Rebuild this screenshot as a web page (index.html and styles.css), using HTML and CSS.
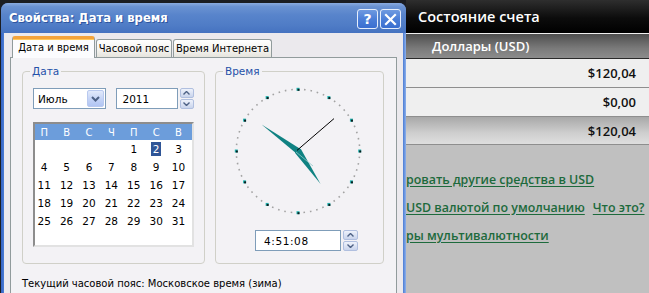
FILE: index.html
```html
<!DOCTYPE html>
<html lang="ru">
<head>
<meta charset="utf-8">
<title>Свойства: Дата и время</title>
<link rel="stylesheet" href="styles.css">
</head>
<body>
<div class="page">
  <div class="desk"></div>
  <div class="account">
    <div class="acc-head">Состояние счета</div>
    <div class="acc-sub">Доллары (USD)</div>
    <div class="acc-row">$120,04</div>
    <div class="acc-row">$0,00</div>
    <div class="acc-row acc-total">$120,04</div>
    <div class="links">
      <div class="link-line"><a class="link">ровать другие средства в USD</a></div>
      <div class="link-line"><a class="link">USD валютой по умолчанию</a><a class="link">Что это?</a></div>
      <div class="link-line"><a class="link">ры мультивалютности</a></div>
    </div>
  </div>

  <div class="window">
    <div class="titlebar">
      <span class="title">Свойства: Дата и время</span>
      <div class="tbtns">
        <span class="tbtn tbtn-help">?</span>
        <span class="tbtn"><svg width="13" height="13" viewBox="0 0 13 13"><path d="M2 2 L11 11 M11 2 L2 11" stroke="#fff" stroke-width="2.2" stroke-linecap="square"/></svg></span>
      </div>
    </div>
    <div class="wbody">
      <div class="tabs">
        <div class="tab tab-active">Дата и время</div>
        <div class="tab tab-2">Часовой пояс</div>
        <div class="tab tab-3">Время Интернета</div>
      </div>
      <div class="panel">
        <div class="groups">
          <fieldset class="group group-date">
            <legend>Дата</legend>
            <div class="date-row">
              <div class="combo">
                <span class="combo-text">Июль</span>
                <span class="combo-btn"><svg width="9" height="6" viewBox="0 0 9 6"><path d="M1 1 L4.5 4.5 L8 1" fill="none" stroke="#4d6185" stroke-width="2"/></svg></span>
              </div>
              <div class="field year">2011</div>
              <div class="spin">
                <span class="spin-half"><svg width="7" height="4" viewBox="0 0 7 4"><path d="M0.5 3.5 L3.5 0.5 L6.5 3.5" fill="none" stroke="#4d6185" stroke-width="1.4"/></svg></span>
                <span class="spin-half"><svg width="7" height="4" viewBox="0 0 7 4"><path d="M0.5 0.5 L3.5 3.5 L6.5 0.5" fill="none" stroke="#4d6185" stroke-width="1.4"/></svg></span>
              </div>
            </div>
            <div class="calendar">
              <div class="cal-head">
                <span>П</span><span>В</span><span>С</span><span>Ч</span><span>П</span><span>С</span><span>В</span>
              </div>
              <div class="cal-grid">
                <span></span><span></span><span></span><span></span><span>1</span><span><b class="sel">2</b></span><span>3</span>
                <span>4</span><span>5</span><span>6</span><span>7</span><span>8</span><span>9</span><span>10</span>
                <span>11</span><span>12</span><span>13</span><span>14</span><span>15</span><span>16</span><span>17</span>
                <span>18</span><span>19</span><span>20</span><span>21</span><span>22</span><span>23</span><span>24</span>
                <span>25</span><span>26</span><span>27</span><span>28</span><span>29</span><span>30</span><span>31</span>
              </div>
            </div>
          </fieldset>
          <fieldset class="group group-time">
            <legend>Время</legend>
            <svg class="clock" width="130" height="130" viewBox="0 0 130 130">
              <circle cx="65" cy="65" r="61.7" fill="none" stroke="#a3a3a3" stroke-width="1.6" stroke-dasharray="1.6 4.86" stroke-dashoffset="0.8"/>
              <g class="hdots">
                <rect x="63.5" y="1.8" width="3" height="3"/>
                <rect x="94.35" y="10.07" width="3" height="3"/>
                <rect x="116.93" y="32.65" width="3" height="3"/>
                <rect x="125.2" y="63.5" width="3" height="3"/>
                <rect x="116.93" y="94.35" width="3" height="3"/>
                <rect x="94.35" y="116.93" width="3" height="3"/>
                <rect x="63.5" y="125.2" width="3" height="3"/>
                <rect x="32.65" y="116.93" width="3" height="3"/>
                <rect x="10.07" y="94.35" width="3" height="3"/>
                <rect x="1.8" y="63.5" width="3" height="3"/>
                <rect x="10.07" y="32.65" width="3" height="3"/>
                <rect x="32.65" y="10.07" width="3" height="3"/>
              </g>
              <g class="hdots-dark">
                <rect x="64.5" y="2.8" width="2" height="2"/>
                <rect x="95.35" y="11.07" width="2" height="2"/>
                <rect x="117.93" y="33.65" width="2" height="2"/>
                <rect x="126.2" y="64.5" width="2" height="2"/>
                <rect x="117.93" y="95.35" width="2" height="2"/>
                <rect x="95.35" y="117.93" width="2" height="2"/>
                <rect x="64.5" y="126.2" width="2" height="2"/>
                <rect x="33.65" y="117.93" width="2" height="2"/>
                <rect x="11.07" y="95.35" width="2" height="2"/>
                <rect x="2.8" y="64.5" width="2" height="2"/>
                <rect x="11.07" y="33.65" width="2" height="2"/>
                <rect x="33.65" y="11.07" width="2" height="2"/>
              </g>
              <polygon points="28.6,38.5 66.6,62.4 69,68 63.4,67.6" fill="#0f8282"/>
              <polygon points="87.6,98 62.1,67 62.4,61 67.9,63" fill="#0f8282"/>
              <path d="M63 66 L80 80" stroke="#8fc8c8" stroke-width="0.8"/>
              <path d="M64 64.4 L101 32.6" stroke="#000" stroke-width="1"/>
            </svg>
            <div class="time-row">
              <div class="field time">4:51:08</div>
              <div class="spin">
                <span class="spin-half"><svg width="7" height="4" viewBox="0 0 7 4"><path d="M0.5 3.5 L3.5 0.5 L6.5 3.5" fill="none" stroke="#4d6185" stroke-width="1.4"/></svg></span>
                <span class="spin-half"><svg width="7" height="4" viewBox="0 0 7 4"><path d="M0.5 0.5 L3.5 3.5 L6.5 0.5" fill="none" stroke="#4d6185" stroke-width="1.4"/></svg></span>
              </div>
            </div>
          </fieldset>
        </div>
        <div class="tz">Текущий часовой пояс: Московское время (зима)</div>
      </div>
    </div>
  </div>
</div>
</body>
</html>
```

FILE: styles.css
```css
* { box-sizing: border-box; }
html, body { margin: 0; padding: 0; }
body {
  font-family: "DejaVu Sans", Verdana, sans-serif;
  font-size: 10px;
  color: #000;
  background: #c0c0c0;
}
.page {
  position: relative;
  width: 649px;
  height: 293px;
  overflow: hidden;
  display: grid;
  grid-template-columns: 406px 1fr;
  background: #c0c0c0;
}
.desk { background: #1b1d22; }

/* ---------- account panel (right) ---------- */
.account {
  font-family: "Open Sans", "DejaVu Sans", sans-serif;
  font-weight: 600;
  display: flex;
  flex-direction: column;
}
.acc-head {
  height: 34px;
  padding-left: 12px;
  display: flex;
  align-items: center;
  color: #fff;
  font-size: 14.5px;
  background: linear-gradient(#2e2e2e, #0c0c0c 55%, #000);
  border-bottom: 1px solid #f0f0f0;
}
.acc-sub {
  height: 25px;
  padding-left: 26px;
  display: flex;
  align-items: center;
  color: #fff;
  font-size: 13px;
  background: linear-gradient(#4e4e4e, #7a7a7a 60%, #8c8c8c);
  border-bottom: 1px solid #2a2a2a;
}
.acc-row {
  height: 29px;
  padding-right: 13px;
  display: flex;
  align-items: center;
  justify-content: flex-end;
  font-size: 13px;
  color: #111;
  background: #efefef;
  border-bottom: 1px solid #8e8e8e;
}
.acc-total {
  height: 28px;
  background: linear-gradient(#a8a8a8, #cfcfcf 60%, #dedede);
  border-bottom: 1px solid #8e8e8e;
}
.links {
  padding-top: 20px;
  font-size: 12.4px;
}
.link-line {
  height: 28px;
  display: flex;
  align-items: center;
  gap: 8px;
  white-space: nowrap;
}
.link {
  color: #1d6a3c;
  text-decoration: underline;
  text-underline-offset: 2px;
}

/* ---------- window ---------- */
.window {
  position: absolute;
  left: 1px;
  top: 3px;
  width: 405px;
  height: 300px;
  border-radius: 7px 7px 0 0;
  background: linear-gradient(90deg, #3463c4, #4b7cd3 3px, #4b7cd3 calc(100% - 3px), #8cb0ec);
  display: flex;
  flex-direction: column;
}
.titlebar {
  height: 30px;
  flex: none;
  border-radius: 7px 7px 0 0;
  background: linear-gradient(#8aabdf, #6a92d2 12%, #5884cb 40%, #4f7cc6 75%, #4572c0);
  display: flex;
  align-items: center;
  justify-content: space-between;
  padding: 0 5px 0 8px;
}
.title {
  color: #fff;
  font-weight: bold;
  font-size: 11.6px;
  text-shadow: 1px 1px 0 #2e55a0;
}
.tbtns { display: flex; gap: 2px; margin-top: 2px; }
.tbtn {
  width: 21px;
  height: 20px;
  border: 1px solid #e6eefc;
  border-radius: 3px;
  background: linear-gradient(#6f9ae0, #4c7fd8 50%, #3a6fd0);
  color: #fff;
  font-weight: bold;
  font-size: 14px;
  display: flex;
  align-items: center;
  justify-content: center;
}
.wbody {
  flex: 1;
  margin: 0 3px;
  background: #ebe9ed;
  padding: 3px 6px 0 6px;
}

/* tabs */
.tabs {
  display: flex;
  align-items: flex-end;
  height: 21px;
  padding-left: 2px;
  gap: 1px;
}
.tab {
  height: 18px;
  border: 1px solid #919b9c;
  border-bottom: none;
  border-radius: 3px 3px 0 0;
  background: linear-gradient(#ffffff, #f3f2ee 60%, #e6e4dd);
  display: flex;
  align-items: center;
  justify-content: center;
  padding-bottom: 1px;
}
.tab-active {
  width: 83px;
  height: 22px;
  margin-bottom: -1px;
  position: relative;
  z-index: 1;
  background: #fcfcfe;
  border-top: 3px solid #f3a33b;
  box-shadow: inset 0 1px 0 #ffc85a;
  padding-bottom: 3px;
}
.tab-2 { width: 76px; }
.tab-3 { width: 99px; }

.panel {
  border: 1px solid #919b9c;
  border-bottom: none;
  background: #f3f2f5;
  height: 260px;
  padding: 7px 12px 0 11px;
}
.groups {
  display: flex;
  gap: 10px;
  align-items: stretch;
}
.group {
  margin: 0;
  border: 1px solid #d0d0c8;
  border-radius: 4px;
  min-width: 0;
}
.group legend {
  color: #2551a8;
  padding: 0 2px;
  margin-left: -3px;
  line-height: 12px;
  font-size: 10.5px;
}
.group-date { width: 183px; padding: 11px 10px 16px 10px; }
.group-time { width: 169px; padding: 0 10px 12px 10px; display: flex; flex-direction: column; }

.date-row { display: flex; height: 21px; }
.combo {
  width: 76px;
  height: 21px;
  border: 1px solid #7f9db9;
  background: #fff;
  display: flex;
  align-items: center;
  justify-content: space-between;
  padding: 1px;
}
.combo-text { padding-left: 3px; font-size: 10.5px; }
.combo-btn {
  width: 17px;
  height: 17px;
  border: 1px solid #b9c9ef;
  border-radius: 2px;
  background: linear-gradient(#e2eafb, #c4d3f6 55%, #b1c5f3);
  display: flex;
  align-items: center;
  justify-content: center;
}
.field {
  height: 21px;
  border: 1px solid #7f9db9;
  background: #fff;
  display: flex;
  align-items: center;
  font-size: 10.5px;
}
.year { width: 63px; margin-left: 10px; padding-left: 5px; }
.spin {
  width: 15px;
  height: 21px;
  margin-left: 2px;
  display: flex;
  flex-direction: column;
  gap: 1px;
}
.spin-half {
  flex: 1;
  border: 1px solid #b0bfdf;
  border-radius: 2px;
  background: linear-gradient(#eef2fb, #c9d4ec);
  display: flex;
  align-items: center;
  justify-content: center;
}

.calendar {
  margin-top: 13px;
  width: 161px;
  height: 125px;
  background: #fff;
  border: 2px solid;
  border-color: #8d8d8d #e2e2e2 #e2e2e2 #8d8d8d;
}
.cal-head, .cal-grid {
  display: grid;
  grid-template-columns: repeat(7, 22.4px);
}
.cal-head {
  height: 16px;
  background: #6c9ddb;
  color: #fff;
  align-items: center;
}
.cal-head span, .cal-grid span {
  text-align: center;
  padding-right: 4px;
}
.cal-grid { grid-auto-rows: 18px; align-items: center; font-size: 10.5px; }
.sel {
  font-weight: normal;
  background: #2f5596;
  color: #fff;
  padding: 1px 2px;
}

.clock { margin: 9px 0 0 7px; display: block; }
.hdots rect { fill: #22b3b0; }
.hdots-dark rect { fill: #0b1d1d; }
.time-row { display: flex; margin: 14px 0 0 29px; }
.time { width: 86px; padding-left: 8px; letter-spacing: 0.6px; }

.tz { margin-top: 14px; font-size: 10px; }
```
